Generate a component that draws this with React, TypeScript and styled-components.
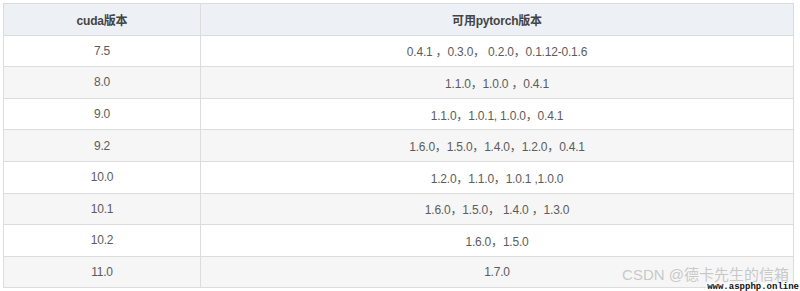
import { createGlobalStyle } from "styled-components";
import styled from "styled-components";

const GlobalStyle = createGlobalStyle`
  html, body {
    margin: 0;
    padding: 0;
    background: #ffffff;
  }
  body {
    font-family: "Liberation Sans", Arial, "Noto Sans CJK SC", sans-serif;
  }
`;

const rows: [string, string][] = [
  ["7.5", "0.4.1 ，0.3.0， 0.2.0，0.1.12-0.1.6"],
  ["8.0", "1.1.0，1.0.0 ，0.4.1"],
  ["9.0", "1.1.0，1.0.1, 1.0.0，0.4.1"],
  ["9.2", "1.6.0，1.5.0，1.4.0，1.2.0，0.4.1"],
  ["10.0", "1.2.0，1.1.0，1.0.1 ,1.0.0"],
  ["10.1", "1.6.0，1.5.0， 1.4.0 ，1.3.0"],
  ["10.2", "1.6.0，1.5.0"],
  ["11.0", "1.7.0"],
];

const Page = styled.div`
  position: relative;
  width: 800px;
  height: 291px;
  padding: 3px 0 0 3px;
  box-sizing: border-box;
  overflow: hidden;
`;

const Table = styled.div`
  width: 791px;
  border: 1px solid #dcdcdc;
  border-bottom: none;
  box-sizing: border-box;
`;

const Row = styled.div<{ $bg: string }>`
  display: grid;
  grid-template-columns: 196px 1fr;
  height: 31.6px;
  background: ${(p) => p.$bg};
  border-bottom: 1px solid #dcdcdc;
  box-sizing: border-box;
`;

const Cell = styled.div<{ $head?: boolean }>`
  display: flex;
  align-items: center;
  justify-content: center;
  font-size: 12px;
  letter-spacing: -0.2px;
  color: ${(p) => (p.$head ? "#444" : "#5c5c5c")};
  font-weight: ${(p) => (p.$head ? 700 : 400)};
  & + & {
    border-left: 1px solid #dcdcdc;
  }
`;

const Watermark = styled.div`
  position: absolute;
  right: 11px;
  bottom: 8px;
  font-size: 15px;
  line-height: 16px;
  color: rgba(160, 160, 160, 0.55);
  font-family: "Liberation Sans", "Noto Sans CJK SC", sans-serif;
  white-space: nowrap;
`;

const SiteMark = styled.div`
  position: absolute;
  right: 0;
  bottom: 0;
  font-size: 9px;
  line-height: 8px;
  font-weight: 700;
  color: #111;
  font-family: "Liberation Mono", "DejaVu Sans Mono", monospace;
  background: rgba(255, 255, 255, 0.7);
  padding: 0 1px;
`;

export default function App() {
  return (
    <Page>
      <GlobalStyle />
      <Table>
        <Row $bg="#edf1f5">
          <Cell $head>cuda版本</Cell>
          <Cell $head>可用pytorch版本</Cell>
        </Row>
        {rows.map(([cuda, torch], i) => (
          <Row key={cuda} $bg={i % 2 === 0 ? "#ffffff" : "#f6f6f6"}>
            <Cell>{cuda}</Cell>
            <Cell>{torch}</Cell>
          </Row>
        ))}
      </Table>
      <Watermark>CSDN @德卡先生的信箱</Watermark>
      <SiteMark>www.aspphp.online</SiteMark>
    </Page>
  );
}
